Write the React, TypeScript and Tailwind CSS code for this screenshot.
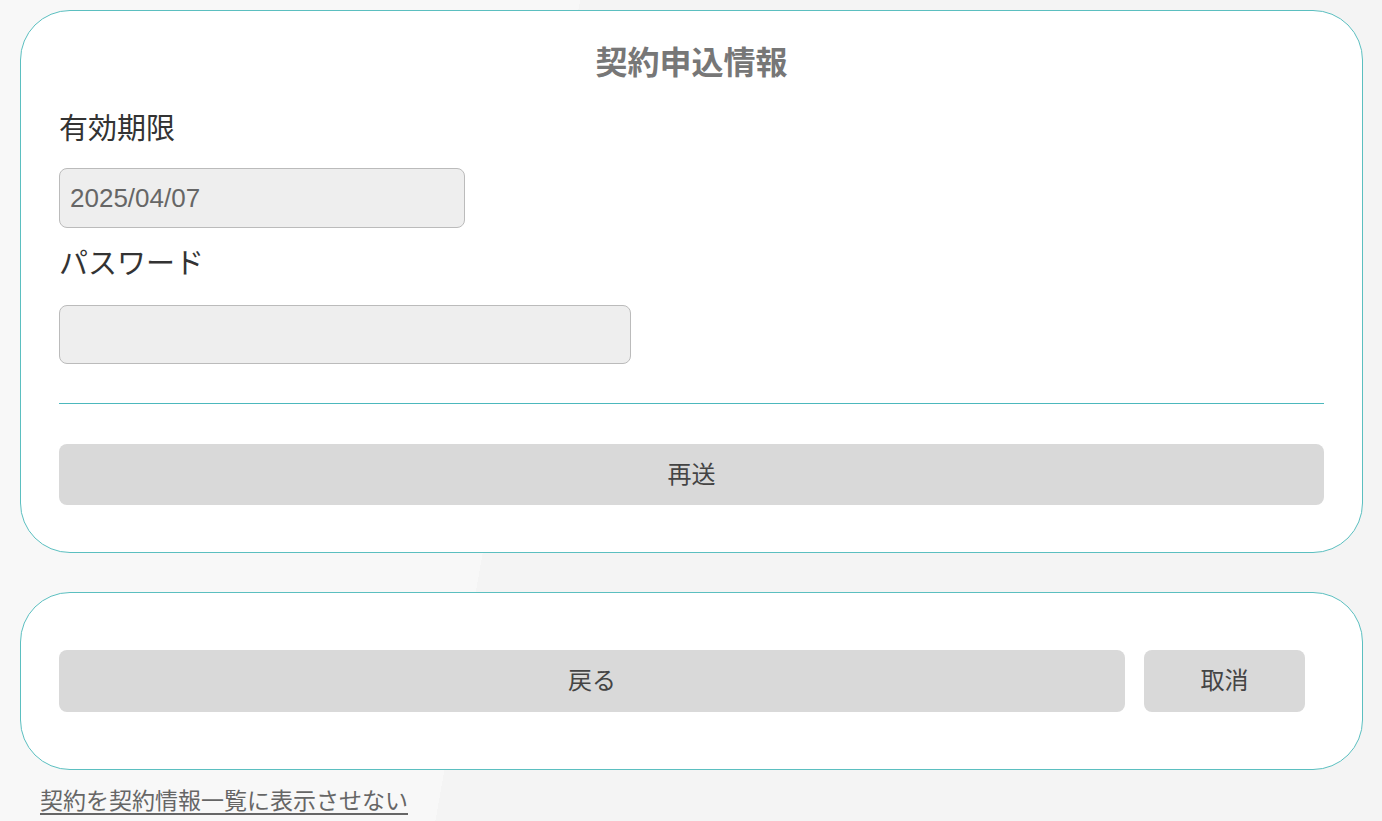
import React from "react";

const font = "font-['Liberation_Sans','Noto_Sans_CJK_JP',sans-serif]";

const GrayButton = ({ label, className = "" }: { label: string; className?: string }) => (
  <button
    type="button"
    className={`flex items-center justify-center rounded-[8px] bg-[#d9d9d9] text-[24px] text-[#444] ${className}`}
  >
    {label}
  </button>
);

const App = () => {
  return (
    <div className={`min-h-[821px] w-full overflow-hidden bg-[linear-gradient(100deg,#f8f8f8_0%,#f8f8f8_38%,#f4f4f4_38%,#f4f4f4_100%)] pt-[10px] ${font}`}>
      {/* 契約申込情報 */}
      <section className="ml-[20px] mr-[19px] rounded-[50px] border border-[#5bbfc0] bg-white px-[38px] pt-[31px] pb-[47px]">
        <h1 className="text-center text-[32px] leading-[42px] font-bold text-[#777]">契約申込情報</h1>

        <div className="mt-[27px] text-[29px] leading-[36px] text-[#333]">有効期限</div>
        <input
          readOnly
          value="2025/04/07"
          className="mt-[21px] block h-[60px] w-[406px] rounded-[8px] border border-[#bbb] bg-[#eeeeee] px-[10px] text-[26px] text-[#666] outline-none"
        />

        <div className="mt-[18px] text-[29px] leading-[36px] text-[#333]">パスワード</div>
        <input
          type="password"
          className="mt-[23px] block h-[59px] w-[572px] rounded-[8px] border border-[#bbb] bg-[#eeeeee] px-[10px] text-[24px] text-[#666] outline-none"
        />

        <div className="mt-[39px] h-px bg-[#4cb8bd]" />

        <GrayButton label="再送" className="mt-[40px] h-[61px] w-full" />
      </section>

      {/* actions */}
      <section className="ml-[20px] mr-[19px] mt-[39px] flex gap-[19px] rounded-[50px] border border-[#5bbfc0] bg-white pt-[57px] pb-[57px] pl-[38px] pr-[57px]">
        <GrayButton label="戻る" className="h-[62px] flex-1" />
        <GrayButton label="取消" className="h-[62px] w-[161px]" />
      </section>

      <div className="mt-[16px] pl-[40px]">
        <a href="#" className="text-[23px] leading-[30px] text-[#666] underline underline-offset-[4px]">
          契約を契約情報一覧に表示させない
        </a>
      </div>
    </div>
  );
};

export default App;
